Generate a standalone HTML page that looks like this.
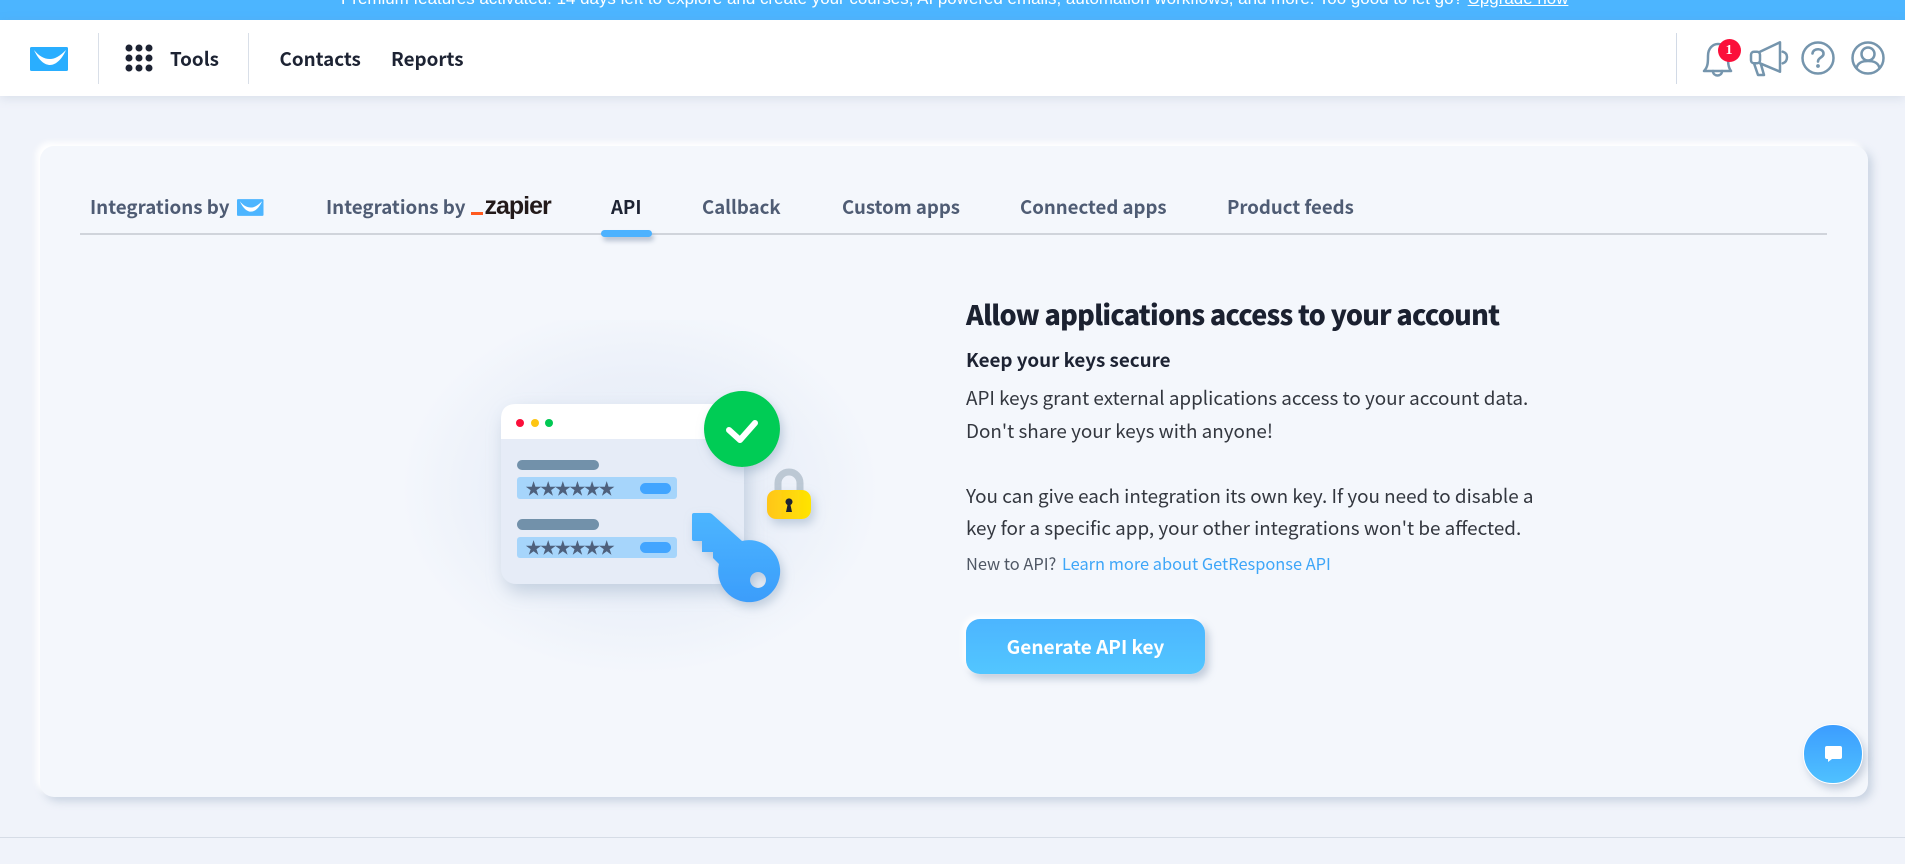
<!DOCTYPE html>
<html lang="en"><head><meta charset="utf-8"><title>API</title>
<style>
*{box-sizing:border-box}
html,body{margin:0;padding:0;width:1905px;height:864px;overflow:hidden;background:#f0f3fa}
body{position:relative;font-family:"Noto Sans CJK JP","Liberation Sans",sans-serif;color:#1d2333}
.a{position:absolute;white-space:nowrap}
.t{font-size:18.6px;line-height:24px;font-weight:700;color:#4f5c74;top:195px}
.n{font-size:18.8px;line-height:24px;font-weight:700;color:#1d2333;top:47px}
.b{font-size:18.85px;line-height:30px;color:#33373f;left:966px}
</style></head><body>
<div class="a" style="left:0;top:0;width:1905px;height:20px;background:#4cb5ff;overflow:hidden">
<div class="a" style="left:341px;top:-10px;font:16.94px/18px 'Liberation Sans',sans-serif;color:#fff">Premium features activated: 14 days left to explore and create your courses, AI powered emails, automation workflows, and more. Too good to let go? <u>Upgrade now</u></div></div>
<div class="a" style="left:0;top:20px;width:1905px;height:76px;background:#fff;box-shadow:0 2px 10px rgba(120,140,170,.2)"></div>
<svg class="a" style="left:30px;top:47px" width="38" height="24" viewBox="0 0 38 24"><rect width="38" height="24" rx="1.5" fill="#29aeff"/><path d="M4 3C9 14 15 18 20 18C26 18 32 12 36 3C30 9 25 12 20 12C14 12 9 9 4 3Z" fill="#fff"/></svg>
<div class="a" style="left:98px;top:33px;width:1px;height:51px;background:#d9dfe8"></div>
<svg class="a" style="left:125px;top:44px" width="28" height="28" fill="#1d2333"><circle cx="4" cy="4" r="3.5"/><circle cx="14" cy="4" r="3.5"/><circle cx="24" cy="4" r="3.5"/><circle cx="4" cy="14" r="3.5"/><circle cx="14" cy="14" r="3.5"/><circle cx="24" cy="14" r="3.5"/><circle cx="4" cy="24" r="3.5"/><circle cx="14" cy="24" r="3.5"/><circle cx="24" cy="24" r="3.5"/></svg>
<div class="a n" style="left:170px">Tools</div>
<div class="a" style="left:248px;top:33px;width:1px;height:51px;background:#d9dfe8"></div>
<div class="a n" style="left:279.5px">Contacts</div>
<div class="a n" style="left:391px">Reports</div>
<div class="a" style="left:1676px;top:33px;width:1px;height:51px;background:#d2dae6"></div>
<svg class="a" style="left:1700px;top:36px" width="195" height="44" fill="none" stroke="#7595ad" stroke-width="2.5" stroke-linejoin="round" stroke-linecap="round">
<path d="M4 35C8 31 8 26 8 20C8 12 13 8 18 8C24 8 28 12 28 20C28 26 28 31 31 35Z"/><path d="M13 35C13 41 22 41 22 35"/>
<rect x="51" y="15.7" width="9" height="11.6" rx="3"/><path d="M60 15.7L80 6.300V35.700L60 27.300"/><path d="M82.700 15.700Q87 17 87 21Q87 26 82.700 27.300"/><path d="M54 27.300L58 39H64L61 28.500"/>
<circle cx="118" cy="22" r="15.5"/><path d="M112.500 17.500C113 11.500 124 12 123.500 18C123.300 21.500 118 21.500 118 25.500" stroke-width="2.600"/><circle cx="118" cy="30" r="1.300" fill="#7595ad" stroke-width="1.200"/>
<circle cx="168" cy="22" r="15.500"/><circle cx="168" cy="18" r="6.500"/><path d="M156.500 32C158 26 163 25 168 25C173 25 178 26 179.500 32"/>
</svg>
<div class="a" style="left:1717.500px;top:38.500px;width:23px;height:23px;border-radius:50%;background:#fb0f3a;color:#fff;font:700 14px/23px 'Liberation Serif',serif;text-align:center">1</div>

<div class="a" style="left:40px;top:146px;width:1828px;height:651px;border-radius:14px;background:#f4f7fc;box-shadow:-4px -4px 6px #fff,4px 4px 9px rgba(150,170,195,.45)"></div>
<div class="a t" style="left:90px;font-size:18.75px">Integrations by</div>
<svg class="a" style="left:237px;top:199px" width="26.5" height="17" viewBox="0 0 38 24"><rect width="38" height="24" rx="1.500" fill="#4cb5ff"/><path d="M4 3C9 14 15 18 20 18C26 18 32 12 36 3C30 9 25 12 20 12C14 12 9 9 4 3Z" fill="#fff"/></svg>
<div class="a t" style="left:326px;font-size:18.75px">Integrations by</div>
<div class="a" style="left:471px;top:212px;width:12px;height:3px;background:#ff5a1f"></div>
<div class="a" style="left:484.5px;top:191px;font:700 25px/30px 'Liberation Sans',sans-serif;letter-spacing:-1px;color:#231a1a">zapier</div>
<div class="a t" style="left:611px;color:#1d2333">API</div>
<div class="a t" style="left:702px">Callback</div>
<div class="a t" style="left:842px">Custom apps</div>
<div class="a t" style="left:1020px">Connected apps</div>
<div class="a t" style="left:1227px">Product feeds</div>
<div class="a" style="left:80px;top:233px;width:1747px;height:1.500px;background:#d0d4db"></div>
<div class="a" style="left:601px;top:230px;width:51px;height:7px;border-radius:4px;background:#4cb2ff;box-shadow:2px 4px 5px rgba(110,130,160,.45)"></div>

<svg class="a" style="left:380px;top:320px" width="520" height="400" viewBox="380 320 520 400">
<defs>
<radialGradient id="gl"><stop offset="0" stop-color="#e6ecf7"/><stop offset=".6" stop-color="#ebf0f9"/><stop offset="1" stop-color="#f4f7fc"/></radialGradient>
<linearGradient id="kg" x1="0" y1="0" x2="0" y2="1"><stop offset="0" stop-color="#4cb5ff"/><stop offset="1" stop-color="#3b9dfb"/></linearGradient>
<linearGradient id="lg" x1="0" y1="0" x2="1" y2="0"><stop offset="0" stop-color="#ffc61a"/><stop offset="1" stop-color="#ffe400"/></linearGradient>
<filter id="s1" x="-30%" y="-30%" width="160%" height="160%"><feDropShadow dx="4" dy="8" stdDeviation="9" flood-color="#8fa6c0" flood-opacity=".45"/></filter>
<filter id="s2" x="-50%" y="-50%" width="200%" height="200%"><feDropShadow dx="3" dy="5" stdDeviation="5" flood-color="#8fa6c0" flood-opacity=".5"/></filter>
</defs>
<ellipse cx="640" cy="490" rx="240" ry="185" fill="url(#gl)"/>
<g filter="url(#s1)"><rect x="501" y="404" width="243" height="180" rx="15" fill="#e6ecf7"/></g>
<path d="M501 439V419Q501 404 516 404H729Q744 404 744 419V439Z" fill="#fff"/>
<circle cx="520" cy="423" r="4" fill="#fb0f3a"/><circle cx="535" cy="423" r="4" fill="#fdc513"/><circle cx="549" cy="423" r="4" fill="#00c853"/>
<rect x="517" y="460" width="82" height="10" rx="5" fill="#7291aa"/>
<rect x="517" y="477" width="160" height="22" rx="3" fill="#a6d5fb"/><rect x="640" y="483" width="31" height="11" rx="5.500" fill="#42a5ff"/>
<text x="525.500" y="495" font-family="'DejaVu Sans',sans-serif" font-size="18" letter-spacing="-1.500" fill="#4e607c" stroke="#4e607c" stroke-width=".5">★★★★★★</text>
<rect x="517" y="519" width="82" height="11" rx="5.500" fill="#7291aa"/>
<rect x="517" y="537" width="160" height="21" rx="3" fill="#a6d5fb"/><rect x="640" y="542" width="31" height="11" rx="5.500" fill="#42a5ff"/>
<text x="525.500" y="554" font-family="'DejaVu Sans',sans-serif" font-size="18" letter-spacing="-1.500" fill="#4e607c" stroke="#4e607c" stroke-width=".5">★★★★★★</text>
<g filter="url(#s2)"><circle cx="742" cy="429" r="38" fill="#00cc55"/></g>
<path d="M729 430L740 440L755 423" fill="none" stroke="#fff" stroke-width="6" stroke-linecap="round" stroke-linejoin="round"/>
<path d="M778 495V483A11 11 0 0 1 800 483V495" fill="none" stroke="#bcc8d4" stroke-width="7"/>
<g filter="url(#s2)"><rect x="767" y="490" width="44" height="29" rx="9" fill="url(#lg)"/></g>
<path d="M786 512L787.500 505A3.500 3.500 0 1 1 790.500 505L792 512Z" fill="#1d2333"/>
<g filter="url(#s2)"><path fill-rule="evenodd" fill="url(#kg)" d="M694 513H709Q711 513 713 515L742 541A31 31 0 1 1 719 564L713 558V552H702V541H694Q692 541 692 539V515Q692 513 694 513ZM758 572A8 8 0 1 0 758.010 572Z"/></g>
</svg>

<div class="a" style="left:966px;top:295px;font-size:27px;line-height:38px;font-weight:900;color:#1b2130;letter-spacing:-.75px">Allow applications access to your account</div>
<div class="a" style="left:966px;top:347px;font-size:18.8px;line-height:26px;font-weight:700;color:#1d2333">Keep your keys secure</div>
<div class="a b" style="top:383px">API keys grant external applications access to your account data.</div>
<div class="a b" style="top:416px">Don't share your keys with anyone!</div>
<div class="a b" style="top:481px">You can give each integration its own key. If you need to disable a</div>
<div class="a b" style="top:513px">key for a specific app, your other integrations won't be affected.</div>
<div class="a" style="left:966px;top:551px;font-size:16.4px;line-height:24px;color:#4f5764">New to API? <span style="color:#3ea6f8;margin-left:2px">Learn more about GetResponse API</span></div>
<div class="a" style="left:966px;top:619px;width:239px;height:55px;border-radius:14px;background:linear-gradient(#4cb5ff,#52c6ff);box-shadow:-3px -3px 6px #fff,4px 5px 8px rgba(120,140,170,.4);color:#fff;text-align:center;font-size:19px;line-height:56px;font-weight:700">Generate API key</div>
<div class="a" style="left:1803px;top:724px;width:59.500px;height:59.500px;border-radius:50%;background:linear-gradient(#3c9dff,#4fc1ff);border:1px solid #fff;box-shadow:3px 5px 8px rgba(110,130,160,.35)"></div>
<svg class="a" style="left:1824px;top:745px" width="19" height="18"><path d="M3 1H16Q18 1 18 3V12Q18 14 16 14H8L4 17V14H3Q1 14 1 12V3Q1 1 3 1Z" fill="#fff"/></svg>
<div class="a" style="left:0;top:837px;width:1905px;height:1px;background:#d6dce6"></div>
</body></html>
